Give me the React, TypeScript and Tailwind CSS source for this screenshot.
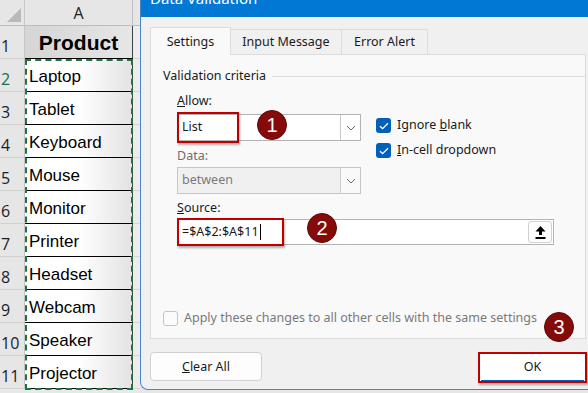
import React from 'react';

const products = ['Laptop', 'Tablet', 'Keyboard', 'Mouse', 'Monitor', 'Printer', 'Headset', 'Webcam', 'Speaker', 'Projector'];

const ui = "font-['Noto_Sans',sans-serif]";

function Chevron() {
  return (
    <svg width="10" height="6" viewBox="0 0 10 6" fill="none">
      <path d="M1 1 L5 5 L9 1" stroke="#6b6b6b" strokeWidth="1" />
    </svg>
  );
}

function Check() {
  return (
    <svg width="10" height="8" viewBox="0 0 10 8" fill="none">
      <path d="M1 4.2 L3.6 6.6 L9 1.2" stroke="white" strokeWidth="1.3" />
    </svg>
  );
}

function Badge({ n, className }: { n: string; className: string }) {
  return (
    <div
      className={`absolute w-[30px] h-[30px] rounded-full bg-[#850b0b] border border-[#5e0606] flex items-center justify-center text-white text-[20px] font-['Liberation_Sans',sans-serif] ${className}`}
    >
      {n}
    </div>
  );
}

function Sheet() {
  return (
    <div className="w-[140px] shrink-0 flex flex-col bg-[#e8e8e8] relative">
      {/* Column header */}
      <div className="flex h-[26px] border-b border-[#bdbdbd]">
        <div className="w-[25px] bg-[#e6e6e6] border-r border-[#c6c6c6] relative">
          <svg className="absolute right-[3px] bottom-[3px]" width="14" height="14" viewBox="0 0 14 14">
            <polygon points="14,0 14,14 0,14" fill="#b9b9b9" />
          </svg>
        </div>
        <div className="w-[108px] bg-[#e6e6e6] border-r border-[#bdbdbd] flex items-center justify-center pt-[1px] text-[16px] text-[#222] font-['Open_Sans',sans-serif]">
          A
        </div>
        <div className="flex-1 bg-[#e6e6e6]" />
      </div>

      {/* Rows */}
      {['Product', ...products].map((p, i) => (
        <div key={p} className="flex h-[33px]">
          <div
            className={`w-[25px] bg-[#e6e6e6] border-r border-[#c6c6c6] border-b border-b-[#d0d0d0] flex items-end pb-[1px] pl-[1px] text-[16px] leading-[22px] font-['Open_Sans',sans-serif] ${
              i === 1 ? 'text-[#1e6b45]' : 'text-[#1b1b2b]'
            }`}
          >
            {i + 1}
          </div>
          {i === 0 ? (
            <div className="w-[108px] border-r border-[#444] border-b border-b-black bg-linear-to-r from-[#d5d5d5] to-[#e6e6e6] flex items-center justify-center pt-[2px] text-[21px] font-bold text-black font-['Liberation_Sans',sans-serif]">
              Product
            </div>
          ) : (
            <div className="w-[108px] border-r border-[#444] border-b border-b-black bg-linear-to-r from-white via-white to-[#e3e3e3] flex items-center pl-[4px] pt-[3px] text-[17px] text-black font-['Liberation_Sans',sans-serif]">
              {p}
            </div>
          )}
          <div className="flex-1 bg-[#ececec] border-b border-[#d6d6d6]" />
        </div>
      ))}

      {/* copy marquee */}
      <div className="absolute left-[25px] top-[59px] w-[108px] h-[331px] border-2 border-dashed border-[#237246]" />
    </div>
  );
}

function Dialog() {
  return (
    <div className={`w-[456px] shrink-0 h-[390px] flex flex-col bg-[#f0f0f0] border-l border-b border-[#4d86c6] rounded-bl-[8px] overflow-hidden text-[12.5px] text-[#1a1a1a] ${ui}`}>
      {/* Title bar */}
      <div className="h-[17px] bg-[#0078d4] overflow-hidden pl-[9px]">
        <div className="text-white text-[15px] leading-[20px] -mt-[12px]">Data Validation</div>
      </div>

      <div className="pl-[9px] pr-[10px] flex flex-col flex-1">
        {/* Tabs */}
        <div className="flex items-end h-[37px]">
          <div className="w-[81px] h-[28px] bg-[#f9f9f9] border border-b-0 border-[#dcdcdc] flex items-center justify-center pt-[2px] relative -mb-[1px] z-10">
            Settings
          </div>
          <div className="w-[111px] h-[25px] bg-[#f0f0f0] border border-l-0 border-b-0 border-[#dcdcdc] flex items-center justify-center pt-[1px]">
            Input Message
          </div>
          <div className="w-[86px] h-[25px] bg-[#f0f0f0] border border-l-0 border-b-0 border-[#dcdcdc] flex items-center justify-center pt-[1px]">
            Error Alert
          </div>
        </div>

        {/* Panel */}
        <div className="h-[285px] bg-[#f9f9f9] border border-[#dcdcdc] flex flex-col">
          <div className="flex items-center pl-[12px] mt-[12px] h-[18px]">
            <span>Validation criteria</span>
            <div className="flex-1 h-px bg-[#dcdcdc] ml-[6px]" />
          </div>

          <div className="pl-[26px] flex gap-[15px] mt-[7px]">
            <div className="w-[184px] flex flex-col">
              <div className="h-[18px] leading-[18px]"><u>A</u>llow:</div>
              <div className="mt-[4px] h-[27px] bg-white border border-[#b3b3b3] flex relative">
                <div className="flex-1 flex items-center pl-[4px]">List</div>
                <div className="w-[20px] border-l border-[#c9c9c9] flex items-center justify-center">
                  <Chevron />
                </div>
                <div className="absolute -left-[1px] -top-[3px] w-[62px] h-[31px] border-2 border-[#c00000] shadow-[1px_2px_2px_rgba(0,0,0,0.3)]" />
              </div>
              <div className="mt-[6px] h-[18px] leading-[18px] text-[#6e6e6e]">Data:</div>
              <div className="mt-[2px] h-[27px] bg-[#f0f0f0] border border-[#c6c6c6] flex">
                <div className="flex-1 flex items-center pl-[4px] text-[#7a7a7a]">between</div>
                <div className="w-[20px] border-l border-[#cfcfcf] bg-[#f9f9f9] flex items-center justify-center">
                  <Chevron />
                </div>
              </div>
            </div>

            <div className="flex flex-col gap-[8px] pt-[25px]">
              <div className="flex items-center gap-[6px] h-[17px]">
                <div className="w-[15px] h-[15px] rounded-[3px] bg-[#005fb8] flex items-center justify-center">
                  <Check />
                </div>
                <span>Ignore <u>b</u>lank</span>
              </div>
              <div className="flex items-center gap-[6px] h-[17px]">
                <div className="w-[15px] h-[15px] rounded-[3px] bg-[#005fb8] flex items-center justify-center">
                  <Check />
                </div>
                <span><u>I</u>n-cell dropdown</span>
              </div>
            </div>
          </div>

          <div className="pl-[26px] mt-[5px]">
            <div className="h-[18px] leading-[18px]"><u>S</u>ource:</div>
            <div className="mt-[2px] w-[377px] h-[26px] bg-white border border-[#b3b3b3] flex items-center relative">
              <div className="pl-[4px] flex items-center">
                =$A$2:$A$11<span className="inline-block w-px h-[16px] bg-black ml-[1px]" />
              </div>
              <div className="ml-auto mr-[1px] w-[24px] h-[22px] rounded-[3px] border border-[#d0d0d0] bg-[#fdfdfd] flex items-center justify-center">
                <svg width="11" height="13" viewBox="0 0 11 13">
                  <polygon points="5.5,0 10.5,5.5 7,5.5 7,9 4,9 4,5.5 0.5,5.5" fill="black" />
                  <rect x="0.5" y="11" width="10" height="2" fill="black" />
                </svg>
              </div>
              <div className="absolute -left-[1px] -top-[2px] w-[107px] h-[28px] border-2 border-[#c00000] shadow-[1px_2px_2px_rgba(0,0,0,0.3)]" />
            </div>
          </div>

          <div className="mt-auto mb-[10px] pl-[12px] flex items-center gap-[6px] text-[#7a7a7a]">
            <div className="w-[15px] h-[15px] rounded-[3px] border border-[#c4c4c4] bg-[#fbfbfb]" />
            <span>Apply these changes to all other cells with the same settings</span>
          </div>
        </div>

        {/* Footer */}
        <div className="flex items-start justify-between mt-[13px]">
          <div className="w-[112px] h-[29px] rounded-[4px] border border-[#d0d0d0] bg-[#fdfdfd] flex items-center justify-center pt-[1px]">
            <span><u>C</u>lear All</span>
          </div>
          <div className="w-[109px] h-[31px] border-2 border-[#c00000] bg-white flex flex-col shadow-[1px_2px_2px_rgba(0,0,0,0.3)] mr-[-1px]">
            <div className="flex-1 flex items-center justify-center pt-[1px]">OK</div>
            <div className="h-px bg-[#005fb8] mx-[1px]" />
          </div>
        </div>
      </div>
    </div>
  );
}

export default function App() {
  return (
    <div className="w-[588px] h-[393px] overflow-hidden relative flex bg-[#e6e6e6]">
      <Sheet />
      <Dialog />
      <Badge n="1" className="left-[257px] top-[110px]" />
      <Badge n="2" className="left-[307px] top-[213px]" />
      <Badge n="3" className="left-[544px] top-[312px]" />
    </div>
  );
}
